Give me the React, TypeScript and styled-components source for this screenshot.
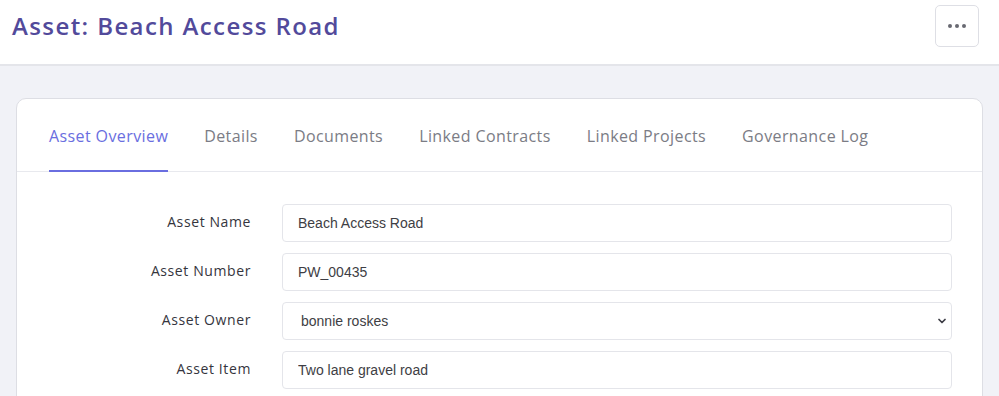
import React from "react";
import styled, { createGlobalStyle } from "styled-components";
import { ChevronDown } from "lucide-react";

const GlobalStyle = createGlobalStyle`
  html, body {
    margin: 0;
    padding: 0;
    background: #f1f2f7;
    font-family: "Open Sans", "Liberation Sans", sans-serif;
  }
  * { box-sizing: border-box; }
`

const Page = styled.div`
  width: 999px;
  height: 396px;
  overflow: hidden;
  background: #f1f2f7;
`
const Header = styled.header`
  height: 66px;
  background: #fff;
  border-bottom: 2px solid #e4e5ea;
  display: flex;
  align-items: center;
  justify-content: space-between;
  padding: 0 20px 12px 12px;
`
const Title = styled.h1`
  margin: 0;
  font-size: 24px;
  line-height: 32px;
  font-weight: 600;
  color: #524a9b;
  letter-spacing: 1.4px;
`
const MoreButton = styled.button`
  width: 44px;
  height: 42px;
  border: 1px solid #dedfe5;
  border-radius: 5px;
  background: #fff;
  display: flex;
  align-items: center;
  justify-content: center;
  gap: 3px;
  padding: 0;
`
const Dot = styled.span`
  width: 4px;
  height: 4px;
  border-radius: 50%;
  background: #686972;
`
const Body = styled.main`
  padding: 32px 16px 0 16px;
`
const Card = styled.section`
  background: #fff;
  border: 1px solid #dddee4;
  border-radius: 10px;
  height: 320px;
`
const Tabs = styled.nav`
  display: flex;
  gap: 36px;
  padding: 0 32px;
  border-bottom: 1px solid #e8e9ee;
`
const Tab = styled.div<{ $active?: boolean }>`
  height: 73px;
  display: flex;
  align-items: center;
  padding-top: 3px;
  font-size: 16px;
  letter-spacing: 0.4px;
  color: ${(p) => (p.$active ? "#6a6ee0" : "#7b7c85")};
  border-bottom: 2px solid ${(p) => (p.$active ? "#6a6ee0" : "transparent")};
  margin-bottom: -1px;
  white-space: nowrap;
`
const Form = styled.div`
  display: grid;
  grid-template-columns: 234px 670px;
  column-gap: 31px;
  row-gap: 11px;
  padding-top: 32px;
`
const Label = styled.label`
  justify-self: end;
  align-self: center;
  font-size: 14px;
  letter-spacing: 0.6px;
  color: #35353d;
  padding-bottom: 4px;
`
const fieldText = `
  height: 38px;
  width: 100%;
  border: 1px solid #e4e5ea;
  border-radius: 4px;
  font-family: "Liberation Sans", Arial, sans-serif;
  font-size: 14px;
  color: #3e3e44;
  background: #fff;
  outline: none;
`
const Input = styled.input`
  ${fieldText}
  padding: 0 15px;
`
const SelectWrap = styled.div`
  position: relative;
  height: 38px;
`
const Select = styled.select`
  ${fieldText}
  appearance: none;
  padding: 0 18px;
`
const Caret = styled(ChevronDown)`
  position: absolute;
  right: 4px;
  top: 13px;
  color: #3d3d45;
  pointer-events: none;
`

const tabs = [
  "Asset Overview",
  "Details",
  "Documents",
  "Linked Contracts",
  "Linked Projects",
  "Governance Log",
]

const App: React.FC = () => {
  return (
    <Page>
      <GlobalStyle />
      <Header>
        <Title>Asset: Beach Access Road</Title>
        <MoreButton aria-label="More actions">
          <Dot />
          <Dot />
          <Dot />
        </MoreButton>
      </Header>
      <Body>
        <Card>
          <Tabs>
            {tabs.map((t, i) => (
              <Tab key={t} $active={i === 0}>
                {t}
              </Tab>
            ))}
          </Tabs>
          <Form>
            <Label>Asset Name</Label>
            <Input defaultValue="Beach Access Road" />
            <Label>Asset Number</Label>
            <Input defaultValue="PW_00435" />
            <Label>Asset Owner</Label>
            <SelectWrap>
              <Select defaultValue="bonnie">
                <option value="bonnie">bonnie roskes</option>
              </Select>
              <Caret size={12} strokeWidth={3.5} />
            </SelectWrap>
            <Label>Asset Item</Label>
            <Input defaultValue="Two lane gravel road" />
          </Form>
        </Card>
      </Body>
    </Page>
  );
};

export default App;
